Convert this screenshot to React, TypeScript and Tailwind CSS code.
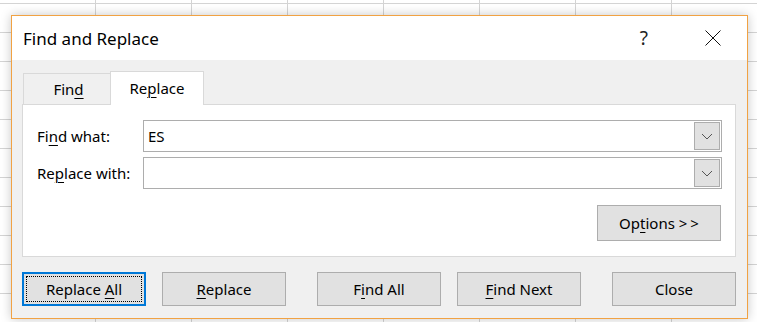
import React from 'react';

function Key({ children }: { children: React.ReactNode }) {
  return <span className="underline decoration-1 underline-offset-[3px]">{children}</span>;
}

function Chevron() {
  return (
    <svg width="12" height="7" viewBox="0 0 12 7" fill="none">
      <path d="M1 1l5 5 5-5" stroke="#555" strokeWidth="1" />
    </svg>
  );
}

function Combo({ value }: { value?: string }) {
  return (
    <div className="flex h-[32px] items-center border border-[#adadad] bg-white p-px">
      <span className="pl-[3px] text-[15px]">{value}</span>
      <div className="ml-auto flex h-full w-[26px] items-center justify-center border border-[#adadad] bg-[#e1e1e1]">
        <Chevron />
      </div>
    </div>
  );
}

function Btn({ children, focused }: { children: React.ReactNode; focused?: boolean }) {
  if (focused) {
    return (
      <button className="h-[34px] w-[124px] border-2 border-[#0078d7] bg-[#e1e1e1] p-[2px] text-[15px]">
        <div className="flex h-full w-full items-center justify-center border border-dotted border-black">
          <span>{children}</span>
        </div>
      </button>
    );
  }
  return (
    <button className="flex h-[34px] w-[124px] items-center justify-center border border-[#adadad] bg-[#e1e1e1] text-[15px]">
      <span>{children}</span>
    </button>
  );
}

export default function App() {
  return (
    <div className="h-[322px] w-[757px] overflow-hidden bg-white bg-[linear-gradient(to_right,#d4d4d4_1px,transparent_1px),linear-gradient(to_bottom,#d4d4d4_1px,transparent_1px)] bg-[size:96px_29px] bg-[position:95px_3px] pl-[11px] pt-[15px] font-['Noto_Sans',sans-serif] leading-none text-black">
      <div className="flex h-[304px] w-[737px] flex-col border border-[#f1a243] bg-[#f0f0f0] shadow-[0_0_10px_rgba(0,0,0,0.22)]">
        {/* Title bar */}
        <div className="flex h-[44px] items-center bg-white pl-[11px]">
          <span className="text-[17px]">Find and Replace</span>
          <span className="ml-auto text-[19px] text-[#222]">?</span>
          <svg className="ml-[57px] mr-[26px]" width="16" height="16" viewBox="0 0 16 16" fill="none">
            <path d="M0.5 0.5l15 15M15.5 0.5l-15 15" stroke="#111" strokeWidth="1" />
          </svg>
        </div>

        <div className="flex flex-1 flex-col pl-[10px] pr-[11px] pt-[11px]">
          {/* Tabs */}
          <div className="flex items-end">
            <div className="ml-px flex h-[31px] w-[87px] items-center justify-center border border-b-0 border-r-0 border-[#d9d9d9] bg-[#f0f0f0] pl-[3px] text-[15px]">
              <span>
                Fin<Key>d</Key>
              </span>
            </div>
            <div className="relative z-10 -mb-px flex h-[34px] w-[94px] items-center justify-center border border-b-0 border-[#d9d9d9] bg-white text-[15px]">
              <span>
                Re<Key>p</Key>lace
              </span>
            </div>
          </div>

          {/* Panel */}
          <div className="flex h-[153px] w-[714px] flex-col border border-[#d9d9d9] bg-white pl-[14px] pr-[13px] pt-[15px]">
            <div className="grid grid-cols-[106px_1fr] gap-y-[5px]">
              <div className="flex items-center text-[15px]">
                <span>
                  Fi<Key>n</Key>d what:
                </span>
              </div>
              <Combo value="ES" />
              <div className="flex items-center text-[15px]">
                <span>
                  Re<Key>p</Key>lace with:
                </span>
              </div>
              <Combo />
            </div>
            <div className="mr-px mt-[16px] flex justify-end">
              <button className="flex h-[36px] w-[124px] items-center justify-center border border-[#adadad] bg-[#e1e1e1] text-[15px]">
                <span>
                  Op<Key>t</Key>ions &gt;<span className="ml-[3px]">&gt;</span>
                </span>
              </button>
            </div>
          </div>

          {/* Action buttons */}
          <div className="mt-[15px] flex">
            <Btn focused>
              Replace <Key>A</Key>ll
            </Btn>
            <div className="ml-[16px]">
              <Btn>
                <Key>R</Key>eplace
              </Btn>
            </div>
            <div className="ml-[31px]">
              <Btn>
                F<Key>i</Key>nd All
              </Btn>
            </div>
            <div className="ml-[16px]">
              <Btn>
                <Key>F</Key>ind Next
              </Btn>
            </div>
            <div className="ml-[31px]">
              <Btn>Close</Btn>
            </div>
          </div>
        </div>
      </div>
    </div>
  );
}
